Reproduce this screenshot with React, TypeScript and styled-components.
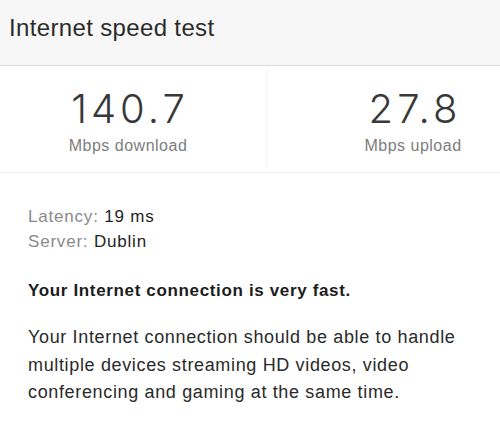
import React from 'react';
import styled, { createGlobalStyle } from 'styled-components';

const GlobalStyle = createGlobalStyle`
  html, body {
    margin: 0;
    padding: 0;
    background: #ffffff;
  }
  body {
    font-family: "Liberation Sans", Arial, Helvetica, sans-serif;
    color: #2a2a2a;
  }
`;

const Page = styled.div`
  width: 500px;
  min-height: 423px;
  background: #ffffff;
`;

const Header = styled.header`
  height: 66px;
  box-sizing: border-box;
  padding: 14px 0 0 9px;
  background: #f7f7f7;
  border-bottom: 1px solid #dadada;
`;

const Title = styled.h1`
  margin: 0;
  font-size: 24px;
  line-height: 28px;
  font-weight: 400;
  letter-spacing: 0.35px;
  color: #2b2b2b;
`;

const StatsRow = styled.section`
  display: grid;
  grid-template-columns: 267px 1fr;
  border-bottom: 1px solid #f1f1f1;
`;

const Stat = styled.div<{ $side: 'left' | 'right' }>`
  display: flex;
  flex-direction: column;
  align-items: center;
  padding: 23px 0 16px;
  padding-right: ${(p) => (p.$side === 'left' ? '11px' : '0')};
  padding-left: ${(p) => (p.$side === 'right' ? '58px' : '0')};
  border-left: ${(p) => (p.$side === 'right' ? '1px solid #f7f7f7' : 'none')};
`;

const Value = styled.div`
  font-family: Inter, "Liberation Sans", sans-serif;
  font-weight: 300;
  font-size: 40px;
  line-height: 40px;
  letter-spacing: 4px;
  margin-right: -4px;
  color: #383838;
`;

const Unit = styled.div`
  margin-top: 7px;
  font-size: 16px;
  line-height: 20px;
  letter-spacing: 0.5px;
  color: #7d7d7d;
`;

const Details = styled.section`
  padding: 31px 28px 20px;
`;

const InfoLine = styled.div`
  font-size: 17px;
  line-height: 25px;
  letter-spacing: 0.8px;
  color: #1f1f1f;
`;

const InfoLabel = styled.span`
  color: #8a8a8a;
`;

const Verdict = styled.p`
  margin: 24px 0 0;
  font-size: 17px;
  line-height: 25px;
  font-weight: 700;
  letter-spacing: 0.65px;
  color: #1c1c1c;
`;

const Description = styled.p`
  margin: 21px 0 0;
  font-size: 18px;
  line-height: 27.5px;
  letter-spacing: 0.65px;
  color: #2a2a2a;
`;

const stats = [
  { value: '140.7', unit: 'Mbps download', side: 'left' as const },
  { value: '27.8', unit: 'Mbps upload', side: 'right' as const },
];

const App: React.FC = () => {
  return (
    <Page>
      <GlobalStyle />
      <Header>
        <Title>Internet speed test</Title>
      </Header>
      <StatsRow>
        {stats.map((s) => (
          <Stat key={s.unit} $side={s.side}>
            <Value>{s.value}</Value>
            <Unit>{s.unit}</Unit>
          </Stat>
        ))}
      </StatsRow>
      <Details>
        <InfoLine>
          <InfoLabel>Latency:</InfoLabel> 19 ms
        </InfoLine>
        <InfoLine>
          <InfoLabel>Server:</InfoLabel> Dublin
        </InfoLine>
        <Verdict>Your Internet connection is very fast.</Verdict>
        <Description>
          Your Internet connection should be able to handle multiple devices streaming HD videos, video
          conferencing and gaming at the same time.
        </Description>
      </Details>
    </Page>
  );
};

export default App;
